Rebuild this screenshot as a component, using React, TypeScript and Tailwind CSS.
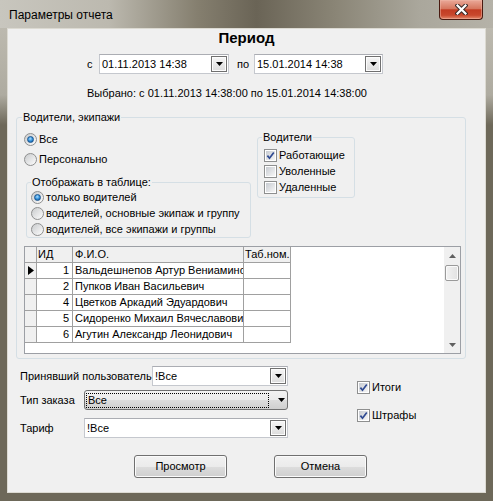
import React from "react";

const rows = [
  ["1", "Вальдешнепов Артур Вениаминович"],
  ["2", "Пупков Иван Васильевич"],
  ["4", "Цветков Аркадий Эдуардович"],
  ["5", "Сидоренко Михаил Вячеславович"],
  ["6", "Агутин Александр Леонидович"],
];

function DownArrow({ className = "" }: { className?: string }) {
  return (
    <svg width="7" height="4" viewBox="0 0 7 4" className={className}>
      <path d="M0 0h7L3.5 4z" fill="#000" />
    </svg>
  );
}

function Combo({ value, className }: { value: string; className: string }) {
  return (
    <div
      className={`flex h-[20px] items-center border border-[#c5c8ce] border-t-[#abadb3] bg-white p-[1px] ${className}`}
    >
      <span className="flex-1 whitespace-nowrap pl-[1px]">{value}</span>
      <span className="flex h-[16px] w-[16px] items-center justify-center border border-[#707070] bg-[linear-gradient(#f6f6f6,#dcdcdc)] shadow-[inset_0_0_0_1px_#fcfcfc]">
        <DownArrow />
      </span>
    </div>
  );
}

function Radio({ checked, label }: { checked?: boolean; label: string }) {
  return (
    <div className="flex h-[16px] items-center gap-[2px] whitespace-nowrap">
      <span className="flex h-[13px] w-[13px] items-center justify-center rounded-full border border-[#8e8f8f] bg-[linear-gradient(135deg,#c9cbcd,#fdfdfd)]">
        {checked && (
          <span className="h-[7px] w-[7px] rounded-full border border-[#1a5590] bg-[radial-gradient(circle_at_45%_35%,#a8dcff,#2b8bd6_55%,#0d4a8a)]" />
        )}
      </span>
      <span>{label}</span>
    </div>
  );
}

function Check({ checked, label }: { checked?: boolean; label: string }) {
  return (
    <div className="flex h-[16px] items-center gap-[2px] whitespace-nowrap">
      <span className="flex h-[13px] w-[13px] border border-[#8e8f8f] bg-white p-[1px]">
        <span className="flex h-full w-full items-center justify-center bg-[linear-gradient(135deg,#c7cbd1,#f7f7f7)]">
          {checked && (
            <svg width="9" height="9" viewBox="0 0 9 9">
              <path d="M1.4 4.6L3.5 7.2L7.8 1.4" fill="none" stroke="#2f4a92" strokeWidth="1.7" />
            </svg>
          )}
        </span>
      </span>
      <span>{label}</span>
    </div>
  );
}

function WinButton({ label }: { label: string }) {
  return (
    <div className="flex h-[23px] w-[93px] items-center justify-center rounded-[3px] border border-[#707070] bg-[linear-gradient(#f2f2f2_0%,#ebebeb_50%,#dddddd_50%,#cfcfcf_100%)] shadow-[inset_0_0_0_1px_#fbfbfb]">
      {label}
    </div>
  );
}

function Grid() {
  return (
    <div className="ml-[7px] mt-[8px] flex h-[108px] w-[437px] border border-[#9c9fa5] bg-white">
      <div className="flex-1 overflow-hidden">
        <div className="flex h-[16px]">
          <div className="w-[12px] border-b border-r border-[#a0a0a0] bg-[#f0f0f0]" />
          <div className="flex w-[36px] items-center border-b border-r border-[#a0a0a0] bg-[#f0f0f0] pl-[1px]">ИД</div>
          <div className="flex w-[171px] items-center border-b border-r border-[#a0a0a0] bg-[#f0f0f0] pl-[2px]">Ф.И.О.</div>
          <div className="flex w-[47px] items-center border-b border-r border-[#a0a0a0] bg-[#f0f0f0] pl-[1px]">Таб.ном.</div>
        </div>
        {rows.map(([id, name], i) => (
          <div key={id} className="flex h-[16px]">
            <div className="flex w-[12px] items-center justify-center border-b border-r border-[#a0a0a0] bg-[#f0f0f0]">
              {i === 0 && (
                <svg width="6" height="9" viewBox="0 0 6 9">
                  <path d="M0 0L6 4.5L0 9z" fill="#000" />
                </svg>
              )}
            </div>
            <div className="flex w-[36px] items-center justify-end border-b border-r border-[#a0a0a0] pr-[3px]">{id}</div>
            <div className="flex w-[171px] items-center overflow-hidden whitespace-nowrap border-b border-r border-[#a0a0a0] pl-[2px]">
              {name}
            </div>
            <div className="w-[47px] border-b border-r border-[#a0a0a0]" />
          </div>
        ))}
      </div>
      <div className="flex w-[16px] flex-col bg-[#f0f0f0]">
        <div className="flex h-[17px] items-center justify-center">
          <svg width="7" height="4" viewBox="0 0 7 4">
            <path d="M0 4h7L3.5 0z" fill="#606060" />
          </svg>
        </div>
        <div className="mx-[1px] mt-[1px] h-[16px] rounded-[2px] border border-[#9a9a9a] bg-[linear-gradient(90deg,#f2f2f2,#e2e2e2)] shadow-[inset_0_0_0_1px_#fafafa]" />
        <div className="flex-1" />
        <div className="flex h-[17px] items-center justify-center">
          <svg width="7" height="4" viewBox="0 0 7 4">
            <path d="M0 0h7L3.5 4z" fill="#606060" />
          </svg>
        </div>
      </div>
    </div>
  );
}

export default function App() {
  return (
    <div className="flex h-[501px] w-[493px] flex-col bg-[linear-gradient(180deg,#c2bfb5_0px,#aeaba0_95px,#6d6859_125px,#6d6859_100%)] font-['Liberation_Sans',Arial,sans-serif] text-[11px] leading-[13px] text-black">
      {/* title bar */}
      <div className="flex h-[28px] items-start bg-[linear-gradient(90deg,#c8c6be_0%,#bcb9af_22%,#857f6f_40%,#6a6456_52%,#8a8576_68%,#aaa79c_85%,#b5b2a8_100%)]">
        <div className="flex-1 pl-[9px] pt-[7px] text-[12px] leading-[16px] text-[#000]">Параметры отчета</div>
        <div className="mr-[10px] flex h-[20px] w-[44px] items-center justify-center rounded-b-[4px] border border-t-0 border-[#4a1a10] bg-[linear-gradient(#eaa999,#d6775f_45%,#c23c23_52%,#c8482d_80%,#e4896b)] shadow-[inset_0_0_0_1px_#f0b8a880]">
          <svg width="13" height="11" viewBox="0 0 13 11">
            <path d="M2.5 1.5L10.5 9.5M10.5 1.5L2.5 9.5" stroke="#3a2a28" strokeWidth="4.2" strokeLinecap="square" />
            <path d="M2.5 1.5L10.5 9.5M10.5 1.5L2.5 9.5" stroke="#ffffff" strokeWidth="2.2" strokeLinecap="square" />
          </svg>
        </div>
      </div>

      {/* client area */}
      <div className="mx-[7px] flex h-[465px] flex-col border border-[#dcdad2] bg-[#f0f0f0]">
        <div className="h-[18px] text-center text-[15px] font-bold leading-[18px]">Период</div>

        <div className="mt-[7px] flex h-[20px] items-center pl-[79px]">
          <span className="w-[12px]">с</span>
          <Combo value="01.11.2013 14:38" className="w-[130px]" />
          <span className="w-[25px] pl-[8px]">по</span>
          <Combo value="15.01.2014 14:38" className="w-[129px]" />
        </div>

        <div className="mt-[12px] pl-[79px] leading-[14px]">Выбрано: с 01.11.2013 14:38:00 по 15.01.2014 14:38:00</div>

        <fieldset className="ml-[8px] mt-[11px] w-[450px] rounded-[3px] border border-[#d5dfe5] pb-[4px]">
          <legend className="ml-[5px] px-[1px] leading-[12px]">Водители, экипажи</legend>
          <div className="flex items-start">
            <div className="w-[240px] pl-[7px]">
              <div className="mt-[8px]">
                <Radio checked label="Все" />
              </div>
              <div className="mt-[4px]">
                <Radio label="Персонально" />
              </div>
              <fieldset className="ml-[2px] mt-[9px] w-[225px] rounded-[3px] border border-[#d5dfe5]">
                <legend className="ml-[4px] px-[1px] leading-[12px]">Отображать в таблице:</legend>
                <div className="mt-[1px] pl-[4px]">
                  <Radio checked label="только водителей" />
                  <Radio label="водителей, основные экипаж и группу" />
                  <Radio label="водителей, все экипажи и группы" />
                </div>
              </fieldset>
            </div>
            <fieldset className="mt-[8px] w-[98px] rounded-[3px] border border-[#d5dfe5] pb-[2px]">
              <legend className="ml-[4px] px-[1px] leading-[12px]">Водители</legend>
              <div className="pl-[6px] pt-[4px]">
                <Check checked label="Работающие" />
                <Check label="Уволенные" />
                <Check label="Удаленные" />
              </div>
            </fieldset>
          </div>
          <Grid />
        </fieldset>

        <div className="mt-[7px] flex items-start">
          <div className="pl-[12px]">
            <div className="flex h-[20px] items-center">
              <span className="w-[132px] whitespace-nowrap">Принявший пользователь</span>
              <Combo value="!Все" className="w-[136px]" />
            </div>
            <div className="mt-[4px] flex h-[20px] items-center">
              <span className="w-[64px]">Тип заказа</span>
              <div className="flex h-[20px] w-[204px] items-center rounded-[3px] border border-[#707070] bg-[linear-gradient(#f2f2f2_0%,#ebebeb_50%,#dddddd_50%,#cfcfcf_100%)] pl-[1px] pr-[2px]">
                <span className="flex h-[15px] w-[183px] items-center border border-dotted border-[#000] pl-[1px]">Все</span>
                <DownArrow className="ml-[9px]" />
              </div>
            </div>
            <div className="mt-[8px] flex h-[20px] items-center">
              <span className="w-[64px]">Тариф</span>
              <Combo value="!Все" className="w-[204px]" />
            </div>
          </div>
          <div className="ml-[69px] mt-[13px]">
            <Check checked label="Итоги" />
            <div className="mt-[12px]">
              <Check checked label="Штрафы" />
            </div>
          </div>
        </div>

        <div className="mt-[17px] flex gap-[47px] pl-[126px]">
          <WinButton label="Просмотр" />
          <WinButton label="Отмена" />
        </div>
      </div>
    </div>
  );
}
